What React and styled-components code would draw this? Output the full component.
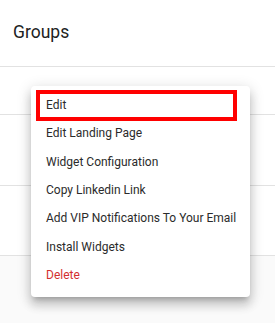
import React from 'react';
import styled, { createGlobalStyle } from 'styled-components';

const GlobalStyle = createGlobalStyle`
  html, body {
    margin: 0;
    padding: 0;
    background: #fafafa;
    font-family: Roboto, "Liberation Sans", Arial, sans-serif;
  }
`;

const PAGE = styled.div`
  position: relative;
  width: 275px;
  height: 323px;
  overflow: hidden;
  background: #fafafa;
`;

const HEADER = styled.div`
  height: 66px;
  display: flex;
  align-items: center;
  padding: 0 13px;
  background: #fff;
  border-bottom: 1px solid #e2e2e2;
  box-sizing: content-box;

  h2 {
    margin: 0;
    font-size: 17.5px;
    font-weight: 400;
    color: #222;
    padding-bottom: 3px;
  }
`;

const ROW = styled.div`
  height: ${p => p.h}px;
  background: #fff;
  border-bottom: 1px solid #e2e2e2;
`;

const MENU = styled.ul`
  position: absolute;
  top: 86px;
  left: 31px;
  width: 219px;
  margin: 0;
  padding: 5px 0 8px;
  list-style: none;
  background: #fff;
  border-radius: 4px;
  box-shadow: 0px 5px 5px -3px rgba(0, 0, 0, 0.2),
    0px 8px 10px 1px rgba(0, 0, 0, 0.14),
    0px 3px 14px 2px rgba(0, 0, 0, 0.12);
`;

const ITEM = styled.li`
  position: relative;
  padding: 5px 15px;
  font-size: 12px;
  line-height: 18.33px;
  color: ${p => (p.danger ? '#d32f2f' : '#2b2b2b')};
  white-space: nowrap;
  cursor: pointer;
`;

// red annotation box drawn over the first entry
const HIGHLIGHT = styled.span`
  position: absolute;
  top: -1px;
  bottom: -2px;
  left: 5px;
  right: 13px;
  border: 4px solid #ff0000;
  pointer-events: none;
`;

const items = [
  'Edit',
  'Edit Landing Page',
  'Widget Configuration',
  'Copy Linkedin Link',
  'Add VIP Notifications To Your Email',
  'Install Widgets',
];

const App = () => {
  return (
    <PAGE>
      <GlobalStyle />
      <HEADER>
        <h2>Groups</h2>
      </HEADER>
      <ROW h={47} />
      <ROW h={70} />
      <ROW h={69} />
      <MENU>
        {items.map((label, i) => (
          <ITEM key={label}>
            {label}
            {i === 0 && <HIGHLIGHT />}
          </ITEM>
        ))}
        <ITEM danger>Delete</ITEM>
      </MENU>
    </PAGE>
  );
};

export default App;
